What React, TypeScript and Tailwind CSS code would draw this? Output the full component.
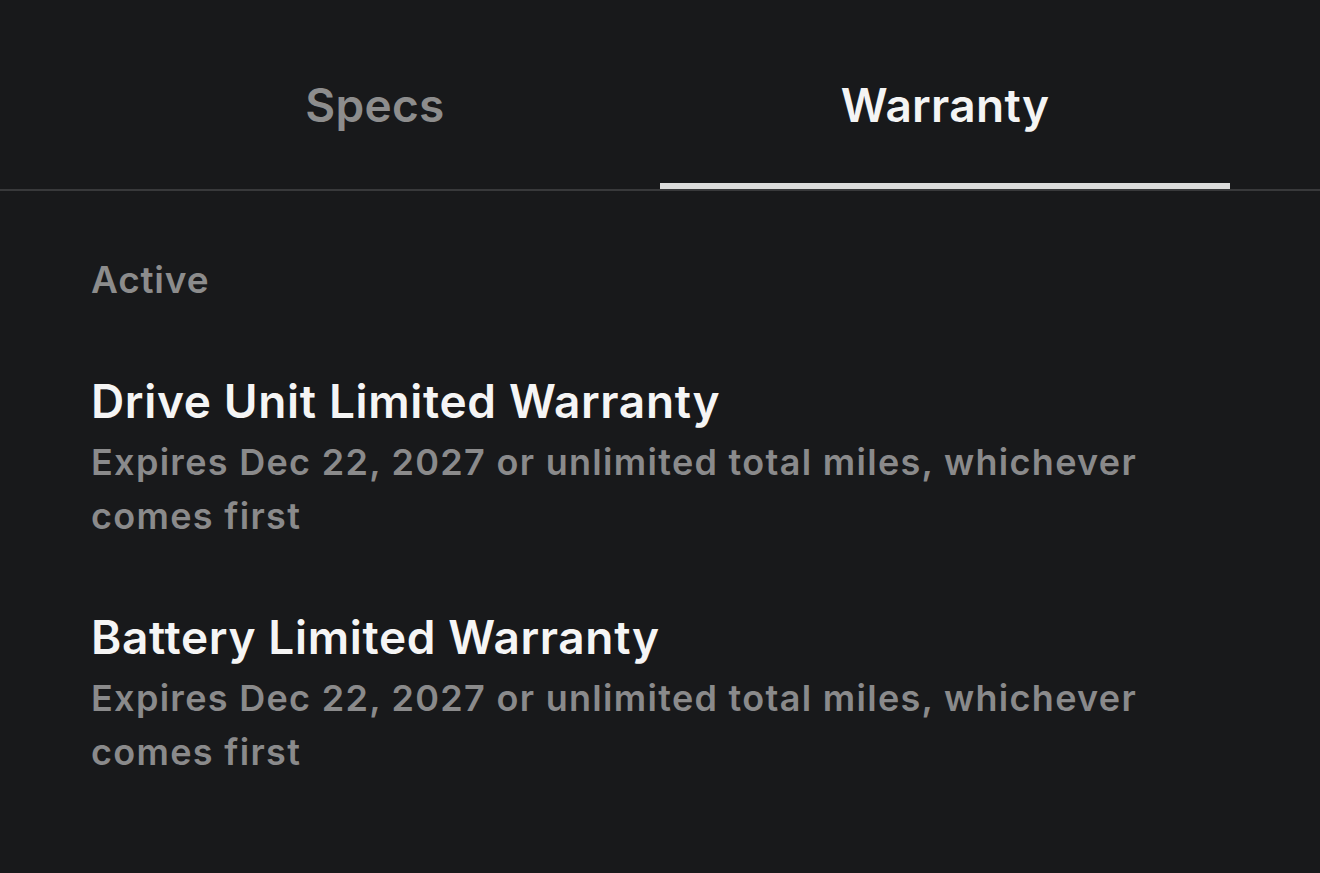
import React from "react";

const items = [
  {
    title: "Drive Unit Limited Warranty",
    sub: "Expires Dec 22, 2027 or unlimited total miles, whichever comes first",
  },
  {
    title: "Battery Limited Warranty",
    sub: "Expires Dec 22, 2027 or unlimited total miles, whichever comes first",
  },
];

export default function App() {
  return (
    <div
      className="min-h-screen w-full bg-[#18191b] antialiased"
      style={{ fontFamily: "Inter, 'Noto Sans', sans-serif" }}
    >
      <div className="border-b-2 border-[#38393b]">
        <div className="flex px-[90px]">
          <button className="flex flex-1 flex-col items-center">
            <span className="pt-[79px] h-[183px] text-[46px] leading-[52px] font-semibold tracking-[0.3px] text-[#8d8d8d]">
              Specs
            </span>
            <span className="h-[6px] w-full" />
          </button>
          <button className="flex flex-1 flex-col items-center">
            <span className="pt-[79px] h-[183px] text-[46px] leading-[52px] font-semibold tracking-[0.3px] text-[#f4f4f4]">
              Warranty
            </span>
            <span className="h-[6px] w-full bg-[#dcdcdc]" />
          </button>
        </div>
      </div>

      <div className="pl-[91px] pr-[90px]">
        <div className="mt-[69px] text-[37px] leading-[40px] font-semibold tracking-[0.8px] text-[#8c8c8c]">
          Active
        </div>
        <div className="mt-[75px] flex flex-col gap-[68px]">
          {items.map((it) => (
            <div key={it.title} className="flex flex-col gap-[8px]">
              <div className="text-[46px] leading-[52px] font-semibold tracking-[0.65px] text-[#f5f5f5]">
                {it.title}
              </div>
              <div className="text-[36px] leading-[54px] font-semibold tracking-[1.3px] text-[#8a8a8b]">
                {it.sub}
              </div>
            </div>
          ))}
        </div>
      </div>
    </div>
  );
}
